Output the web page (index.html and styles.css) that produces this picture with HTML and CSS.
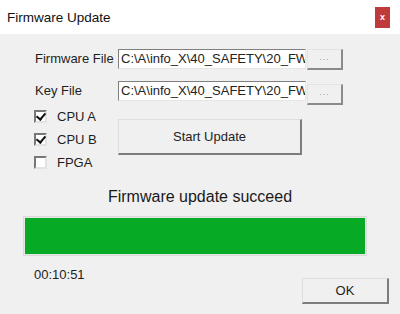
FILE: index.html
```html
<!DOCTYPE html>
<html lang="en">
<head>
  <meta charset="UTF-8">
  <title>Firmware Update</title>
  <link rel="stylesheet" href="styles.css">
</head>
<body>

  <div class="window">
    <div class="titlebar">
      <span class="title">Firmware Update</span>
      <button class="close">x</button>
    </div>

    <div class="content">
      <div class="file-row">
        <label class="file-label">Firmware File</label>
        <div class="path">C:\A\info_X\40_SAFETY\20_FW</div>
        <button class="browse">...</button>
      </div>
      <div class="file-row second">
        <label class="file-label">Key File</label>
        <div class="path">C:\A\info_X\40_SAFETY\20_FW</div>
        <button class="browse">...</button>
      </div>

      <div class="options">
        <div class="targets">
          <div class="check-row">
            <span class="checkbox checked"></span>
            <span>CPU A</span>
          </div>
          <div class="check-row">
            <span class="checkbox checked"></span>
            <span>CPU B</span>
          </div>
          <div class="check-row">
            <span class="checkbox"></span>
            <span>FPGA</span>
          </div>
        </div>
        <button class="btn start">Start Update</button>
      </div>
    </div>

    <p class="status">Firmware update succeed</p>

    <div class="progress-bar">
      <div class="progress" style="width: 100%"></div>
    </div>

    <div class="footer">
      <span class="elapsed">00:10:51</span>
      <button class="btn ok">OK</button>
    </div>
  </div>

</body>
</html>
```

FILE: styles.css
```css
* {
  box-sizing: border-box;
}

body {
  margin: 0;
  background-color: #f0f0f0;
}

.window {
  width: 400px;
  height: 314px;
  background-color: #f0f0f0;
  font-family: "Liberation Sans", Arial, sans-serif;
  font-size: 13px;
  color: #1e1e1e;
  overflow: hidden;
}

.titlebar {
  height: 34px;
  background-color: #fff;
  display: flex;
  align-items: center;
  justify-content: space-between;
  padding: 0 10px 0 7px;
}

.title {
  font-size: 13.5px;
  color: #111;
}

.close {
  width: 15px;
  height: 21px;
  padding: 0;
  border: none;
  background-color: #bf3a3a;
  color: #fff;
  font-family: inherit;
  font-size: 9px;
  font-weight: bold;
  line-height: 21px;
}

.content {
  padding: 15px 0 0 34px;
}

.file-row {
  display: flex;
  align-items: flex-start;
  height: 21px;
}

.file-row.second {
  margin-top: 11px;
}

.file-label {
  width: 84px;
  padding-left: 1px;
  line-height: 20px;
}

.path {
  width: 188px;
  height: 20px;
  padding: 0 0 0 2px;
  background-color: #fff;
  border: 1px solid;
  border-color: #7f7f7f #e6e6e6 #e6e6e6 #7f7f7f;
  line-height: 18px;
  white-space: nowrap;
  overflow: hidden;
  color: #222;
}

.browse {
  width: 36px;
  height: 21px;
  margin-left: 1px;
  padding: 0 0 4px;
  background-color: #f0f0f0;
  border-style: solid;
  border-width: 1px 2px 2px 1px;
  border-color: #e3e3e3 #8a8a8a #8a8a8a #e3e3e3;
  font-family: inherit;
  font-size: 9px;
  color: #9a9a9a;
  letter-spacing: 1px;
}

.file-row.second .browse {
  margin-top: 3px;
}

.options {
  display: flex;
  align-items: flex-start;
  margin-top: 3px;
}

.targets {
  width: 84px;
}

.check-row {
  display: flex;
  align-items: center;
  gap: 10px;
  height: 23px;
}

.checkbox {
  width: 13px;
  height: 13px;
  background-color: #fff;
  border: 2px solid;
  border-color: #777 #e2e2e2 #e2e2e2 #777;
  display: flex;
  align-items: center;
  justify-content: center;
}

.checkbox.checked::after {
  content: "";
  width: 4px;
  height: 7px;
  margin-top: -2px;
  border: solid #111;
  border-width: 0 2px 2px 0;
  transform: rotate(40deg);
}

.btn {
  background-color: #f0f0f0;
  border-style: solid;
  border-width: 1px 2px 2px 1px;
  border-color: #dedede #7d7d7d #7d7d7d #dedede;
  font-family: inherit;
  font-size: 13px;
  color: #1e1e1e;
  padding: 0;
}

.start {
  width: 184px;
  height: 36px;
  margin-top: 14px;
}

.status {
  margin: 13px 0 0;
  text-align: center;
  font-size: 16px;
  line-height: 20px;
  color: #1a1a1a;
}

.progress-bar {
  width: 344px;
  height: 40px;
  margin: 9px 0 0 23px;
  padding: 1px;
  border: 1px solid #dadada;
  background-color: #e6e6e6;
}

.progress {
  height: 100%;
  background-color: #07aa25;
}

.footer {
  display: flex;
  justify-content: space-between;
  align-items: flex-start;
  padding: 0 11px 0 34px;
}

.elapsed {
  margin-top: 11px;
  line-height: 16px;
}

.ok {
  width: 87px;
  height: 26px;
  margin-top: 22px;
}
```
